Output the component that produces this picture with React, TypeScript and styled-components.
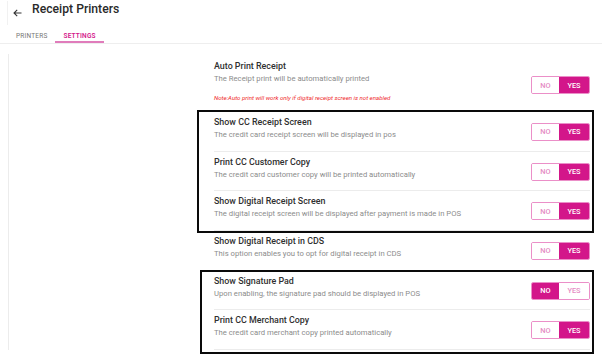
import React from "react";
import styled, { createGlobalStyle } from "styled-components";

const Global = createGlobalStyle`
  html, body { margin: 0; padding: 0; background: #fff; }
  body { font-family: Roboto, "Liberation Sans", Arial, sans-serif; width: 602px; height: 358px; overflow: hidden; }
`;

const PINK = "#d3168a";

const Page = styled.div`
  position: relative;
  width: 602px;
  height: 358px;
  background: #fff;
`;

const Header = styled.div`
  display: flex;
  align-items: flex-start;
  height: 25px;
  padding-left: 7px;
  padding-top: 1px;
  box-sizing: border-box;
`;

const BackButton = styled.div`
  width: 20px;
  height: 24px;
  border-left: 1px solid #f1f1f1;
  display: flex;
  align-items: center;
  justify-content: center;
  padding-top: 0px;
  box-sizing: border-box;
  color: #333;
`;

const Title = styled.h1`
  margin: 0 0 0 5px;
  font-size: 12.2px;
  font-weight: 500;
  color: #2a2a2a;
  line-height: 16px;
`;

const Tabs = styled.div`
  display: flex;
  height: 18px;
  border-bottom: 1.5px solid #eeeeee;
  padding-left: 8px;
`;

const Tab = styled.div<{ $active?: boolean }>`
  box-sizing: border-box;
  padding: 0 8px;
  height: 18px;
  display: flex;
  align-items: center;
  padding-top: 5px;
  font-size: 6.5px;
  font-weight: ${(p) => (p.$active ? 600 : 400)};
  letter-spacing: 0.2px;
  color: ${(p) => (p.$active ? PINK : "#777")};
  border-bottom: 2px solid ${(p) => (p.$active ? "#e07cbb" : "transparent")};
  margin-bottom: -1.5px;
`;

const Body = styled.div`
  display: flex;
  margin-top: 10px;
  margin-left: 8px;
  height: 296px;
  border-left: 1px solid #ececec;
`;

const Content = styled.div`
  margin-left: 205px;
  width: 376px;
  display: flex;
  flex-direction: column;
  padding-top: 2px;
`;

const Row = styled.div<{ $tall?: boolean }>`
  display: flex;
  justify-content: space-between;
  align-items: flex-start;
  height: ${(p) => (p.$tall ? 56 : 39.8)}px;
  box-sizing: border-box;
  border-bottom: 1px solid #ececec;
`;

const Texts = styled.div`
  display: flex;
  flex-direction: column;
  padding-top: 5px;
`;

const RowTitle = styled.div`
  font-size: 8.9px;
  font-weight: 500;
  color: #303030;
  line-height: 11px;
`;

const RowDesc = styled.div`
  font-size: 7.7px;
  color: #8c8c8c;
  line-height: 11px;
  margin-top: 1px;
`;

const Note = styled.div`
  font-size: 6.1px;
  font-style: italic;
  color: #ef2b2b;
  margin-top: 10px;
`;

const Toggle = styled.div<{ $low?: boolean }>`
  display: flex;
  margin-top: ${(p) => (p.$low ? 20 : 11)}px;
  height: 18px;
  border: 1px solid #eb8fc8;
  border-radius: 2px;
  box-sizing: border-box;
  overflow: hidden;
`;

const Opt = styled.div<{ $on?: boolean; $w: number }>`
  width: ${(p) => p.$w}px;
  display: flex;
  align-items: center;
  justify-content: center;
  font-size: 7.4px;
  font-weight: 500;
  background: ${(p) => (p.$on ? PINK : "#fff")};
  color: ${(p) => (p.$on ? "#fff" : "#e58cc4")};
`;

const Mark = styled.div<{ $l: number; $t: number; $w: number; $h: number }>`
  position: absolute;
  left: ${(p) => p.$l}px;
  top: ${(p) => p.$t}px;
  width: ${(p) => p.$w}px;
  height: ${(p) => p.$h}px;
  border: 2.5px solid #0a0a0a;
  box-sizing: border-box;
  pointer-events: none;
`;

type Item = { title: string; desc: string; yes: boolean; note?: string };

const items: Item[] = [
  {
    title: "Auto Print Receipt",
    desc: "The Receipt print will be automatically printed",
    yes: true,
    note: "Note:Auto print will work only if digital receipt screen is not enabled",
  },
  { title: "Show CC Receipt Screen", desc: "The credit card receipt screen will be displayed in pos", yes: true },
  { title: "Print CC Customer Copy", desc: "The credit card customer copy will be printed automatically", yes: true },
  { title: "Show Digital Receipt Screen", desc: "The digital receipt screen will be displayed after payment is made in POS", yes: true },
  { title: "Show Digital Receipt in CDS", desc: "This option enables you to opt for digital receipt in CDS", yes: true },
  { title: "Show Signature Pad", desc: "Upon enabling, the signature pad should be displayed in POS", yes: false },
  { title: "Print CC Merchant Copy", desc: "The credit card merchant copy printed automatically", yes: true },
];

const Arrow = () => (
  <svg width="9" height="8" viewBox="0 0 9 8" fill="none" stroke="#333" strokeWidth="1.1">
    <path d="M8.5 4H1M4.2 0.8L1 4l3.2 3.2" />
  </svg>
);

export default function App() {
  return (
    <Page>
      <Global />
      <Header>
        <BackButton>
          <Arrow />
        </BackButton>
        <Title>Receipt Printers</Title>
      </Header>
      <Tabs>
        <Tab>PRINTERS</Tab>
        <Tab $active>SETTINGS</Tab>
      </Tabs>
      <Body>
        <Content>
          {items.map((it, i) => (
            <Row key={i} $tall={!!it.note}>
              <Texts>
                <RowTitle>{it.title}</RowTitle>
                <RowDesc>{it.desc}</RowDesc>
                {it.note && <Note>{it.note}</Note>}
              </Texts>
              <Toggle $low={!!it.note}>
                <Opt $w={27} $on={!it.yes}>NO</Opt>
                <Opt $w={30} $on={it.yes}>YES</Opt>
              </Toggle>
            </Row>
          ))}
        </Content>
      </Body>
      <Mark $l={197} $t={110} $w={397} $h={123} />
      <Mark $l={200} $t={270} $w={394} $h={84} />
    </Page>
  );
}
